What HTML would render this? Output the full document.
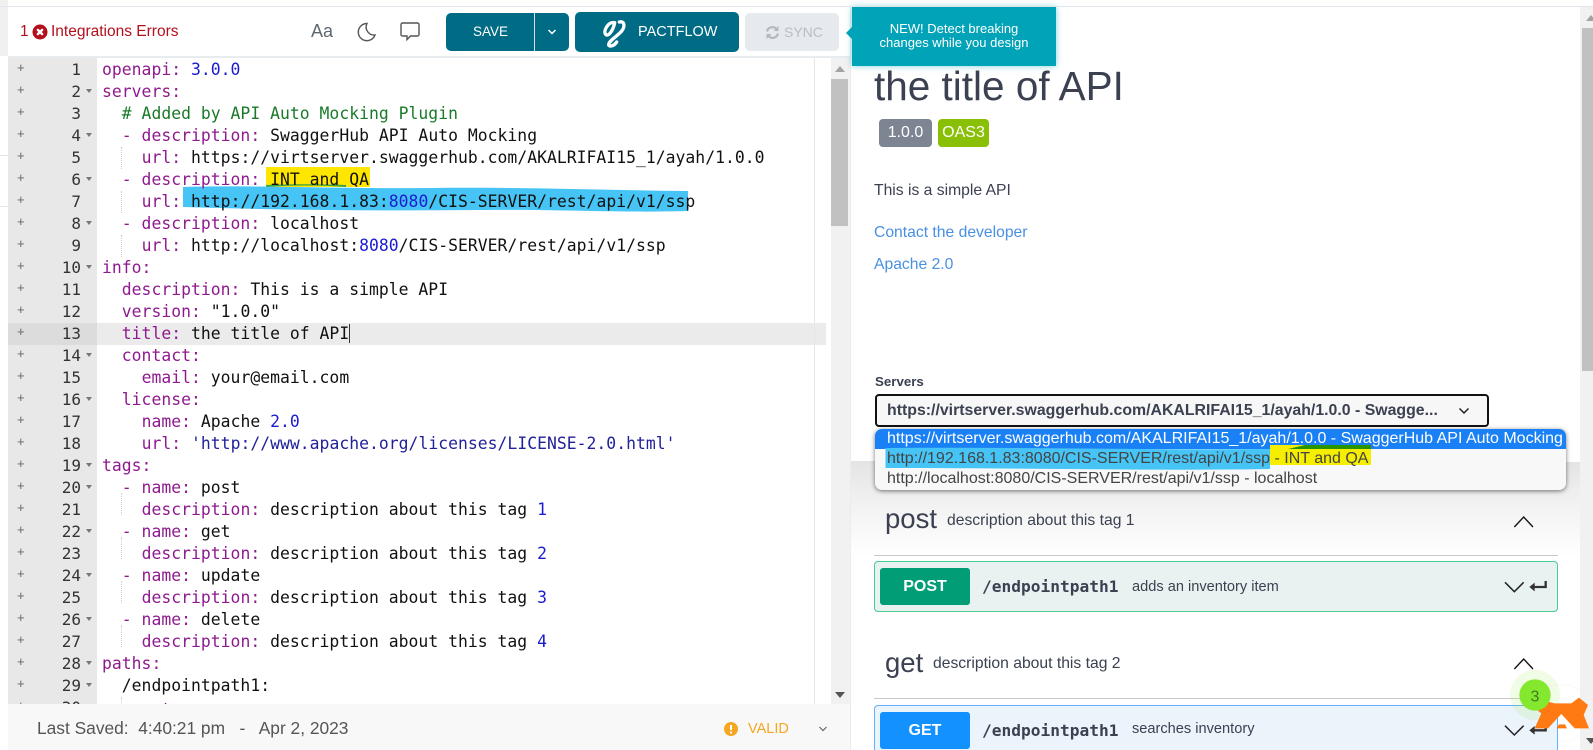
<!DOCTYPE html>
<html><head><meta charset="utf-8"><title>Editor</title>
<style>
*{box-sizing:border-box}
html,body{margin:0;padding:0;width:1593px;height:750px;overflow:hidden;background:#fff;font-family:"Liberation Sans",sans-serif}
#root{position:absolute;left:0;top:0;width:1593px;height:750px;overflow:hidden;contain:paint}
.a{position:absolute;white-space:nowrap}
#code{position:absolute;left:102px;top:59px;margin:0;font:16.4px/22px "DejaVu Sans Mono",monospace;letter-spacing:.02px;color:#111;z-index:3}
#code i{font-style:normal;color:#8f1a8f}
#code b{font-weight:normal;color:#1b1bd0}
#code u{text-decoration:none;color:#1a7a2a}
#nums{position:absolute;left:8px;top:59px;width:73px;text-align:right;font:16px/22px "DejaVu Sans Mono",monospace;color:#333;margin:0}
#plus{position:absolute;left:17px;top:57px;margin:0;font:13px/22px "Liberation Sans",sans-serif;color:#666}
.btn{position:absolute;background:#006b85;color:#fff;border-radius:5px;font-size:14px;text-align:center}
.guide{position:absolute;width:0;border-left:1px dotted #ccc;height:22px;z-index:2}
.fold{position:absolute;left:86px;width:0;height:0;border-left:3.5px solid transparent;border-right:3.5px solid transparent;border-top:4px solid #777}
.tag{font-size:27.5px;color:#3b4151}
.sum{font-size:14.6px;color:#3b4151}
.path{font:bold 16.2px "DejaVu Sans Mono",monospace;color:#3b4151}
</style></head><body>
<div id="root">

<!-- left edge -->
<div class="a" style="left:0;top:0;width:8px;height:56px;background:#f0f0f0"></div>
<div class="a" style="left:0;top:155px;width:8px;height:1px;background:#e3e3e3"></div>
<div class="a" style="left:0;top:206px;width:8px;height:1px;background:#e3e3e3"></div>
<div class="a" style="left:0;top:6px;width:1593px;height:1px;background:#dfe5eb;z-index:9"></div>

<!-- toolbar -->
<div class="a" style="left:8px;top:56px;width:842px;height:2px;background:#e8ecef"></div>
<div class="a" style="left:20px;top:23px;font-size:15.5px;color:#b3101c">1</div>
<svg class="a" style="left:32px;top:24px" width="16" height="16" viewBox="0 0 16 16"><circle cx="8" cy="8" r="7.500" fill="#b3101c"/><path d="M5.200 5.200l5.600 5.600M10.800 5.200l-5.600 5.600" stroke="#fff" stroke-width="2.400"/></svg>
<div class="a" style="left:51px;top:23px;font-size:15.500px;color:#b3101c">Integrations Errors</div>
<div class="a" style="left:311px;top:21px;font-size:18px;color:#5f6770">Aa</div>
<svg class="a" style="left:356px;top:21px" width="21" height="21" viewBox="0 0 21 21"><path d="M11 2.500a8.600 8.600 0 1 0 8 11.500 8 8 0 0 1-8-11.500z" fill="none" stroke="#555" stroke-width="1.400"/></svg>
<svg class="a" style="left:399px;top:21px" width="22" height="21" viewBox="0 0 22 21"><path d="M3.500 2h15a1.500 1.500 0 0 1 1.500 1.500v10a1.500 1.500 0 0 1-1.500 1.500h-7l-3.500 3.500v-3.500h-4.500a1.500 1.500 0 0 1-1.500-1.500v-10a1.500 1.500 0 0 1 1.500-1.500z" fill="none" stroke="#555" stroke-width="1.400"/></svg>

<div class="btn" style="left:446px;top:13px;width:123px;height:38px"></div>
<div class="a" style="left:534px;top:13px;width:1px;height:38px;background:#d5e3e8"></div>
<div class="a" style="left:473px;top:24px;font-size:13.500px;color:#fff">SAVE</div>
<svg class="a" style="left:546px;top:27px" width="12" height="10" viewBox="0 0 12 10"><path d="M2.500 3l3.500 3.500 3.500-3.500" fill="none" stroke="#fff" stroke-width="1.500"/></svg>
<div class="btn" style="left:575px;top:12px;width:164px;height:40px"></div>
<svg class="a" style="left:596px;top:14px" width="40" height="36" viewBox="0 0 120 108"><path d="M56 26C38 22 22 48 28 60 36 72 52 48 56 26M70 24C85 20 88 36 78 50 66 66 40 78 38 92 38 100 55 96 62 84" fill="none" stroke="#fff" stroke-width="10" stroke-linecap="round"/></svg>
<div class="a" style="left:638px;top:24px;font-size:14.500px;color:#fff">PACTFLOW</div>
<div class="a" style="left:745px;top:13px;width:94px;height:38px;background:#e6e9ee;border-radius:5px"></div>
<svg class="a" style="left:765px;top:25px" width="15" height="15" viewBox="0 0 15 15"><path d="M2 6.500a5.500 5.500 0 0 1 9.500-2.500M13 8.500a5.500 5.500 0 0 1-9.500 2.500" fill="none" stroke="#b4b9c1" stroke-width="2.200"/><path d="M13.500 1v5h-5zM1.500 14v-5h5z" fill="#b4b9c1"/></svg>
<div class="a" style="left:784px;top:24px;font-size:14px;color:#b9bdc5">SYNC</div>

<!-- gutter + editor -->
<div class="a" style="left:8px;top:58px;width:89px;height:646px;background:#e8e8e8"></div>
<div class="a" style="left:8px;top:323px;width:89px;height:22px;background:#dcdcdc"></div>
<div class="a" style="left:97px;top:323px;width:729px;height:22px;background:#ebebeb"></div>
<div class="a" style="left:8px;top:58px;width:842px;height:646px;overflow:hidden">
<div style="position:absolute;left:-8px;top:-58px;width:850px;height:704px">
<pre id="plus">+
+
+
+
+
+
+
+
+
+
+
+
+
+
+
+
+
+
+
+
+
+
+
+
+
+
+
+
+
+</pre>
<pre id="nums">1
2
3
4
5
6
7
8
9
10
11
12
13
14
15
16
17
18
19
20
21
22
23
24
25
26
27
28
29
30</pre>
<div class="fold" style="top:89px"></div><div class="fold" style="top:133px"></div><div class="fold" style="top:177px"></div><div class="fold" style="top:221px"></div><div class="fold" style="top:265px"></div><div class="fold" style="top:353px"></div><div class="fold" style="top:397px"></div><div class="fold" style="top:463px"></div><div class="fold" style="top:485px"></div><div class="fold" style="top:529px"></div><div class="fold" style="top:573px"></div><div class="fold" style="top:617px"></div><div class="fold" style="top:661px"></div><div class="fold" style="top:683px"></div>
<div class="guide" style="left:121px;top:147px"></div><div class="guide" style="left:121px;top:191px"></div><div class="guide" style="left:121px;top:235px"></div><div class="guide" style="left:121px;top:493px"></div><div class="guide" style="left:121px;top:537px"></div><div class="guide" style="left:121px;top:581px"></div><div class="guide" style="left:121px;top:625px"></div><div class="guide" style="left:121px;top:697px"></div>
<svg class="a" style="left:0;top:0;z-index:1" width="850" height="250"><path d="M266 167H370V187H266z" fill="#ffe600"/><path d="M266 187c25-2 55-2 80 0v-2c-25-1-55-1-80 0z" fill="#3aa33a"/><path d="M183 187C260 185 340 189 430 188 520 187 600 190 688 191L688 211C620 213 560 209 480 210 380 211 280 210 183 207z" fill="#45c4f5"/></svg>
<pre id="code"><i>openapi:</i> <b>3.0.0</b>
<i>servers:</i>
  <u># Added by API Auto Mocking Plugin</u>
  <i>- description:</i> SwaggerHub API Auto Mocking
    <i>url:</i> https://virtserver.swaggerhub.com/AKALRIFAI15_1/ayah/1.0.0
  <i>- description:</i> INT and QA
    <i>url:</i> http://192.168.1.83:<b>8080</b>/CIS-SERVER/rest/api/v1/ssp
  <i>- description:</i> localhost
    <i>url:</i> http://localhost:<b>8080</b>/CIS-SERVER/rest/api/v1/ssp
<i>info:</i>
  <i>description:</i> This is a simple API
  <i>version:</i> "1.0.0"
  <i>title:</i> the title of API<span style="border-left:1px solid #333"></span>
  <i>contact:</i>
    <i>email:</i> your@email.com
  <i>license:</i>
    <i>name:</i> Apache <b>2.0</b>
    <i>url:</i> <span style="color:#21219a">'http://www.apache.org/licenses/LICENSE-2.0.html'</span>
<i>tags:</i>
  <i>- name:</i> post
    <i>description:</i> description about this tag <b>1</b>
  <i>- name:</i> get
    <i>description:</i> description about this tag <b>2</b>
  <i>- name:</i> update
    <i>description:</i> description about this tag <b>3</b>
  <i>- name:</i> delete
    <i>description:</i> description about this tag <b>4</b>
<i>paths:</i>
  /endpointpath1:
    <i style="position:relative;top:2px">get:</i></pre>
</div></div>

<!-- editor scrollbar -->
<div class="a" style="left:814px;top:58px;width:1px;height:646px;background:#e6e6e6"></div>
<div class="a" style="left:831px;top:58px;width:19px;height:646px;background:#f1f1f1"></div>
<div class="a" style="left:831px;top:79px;width:17px;height:147px;background:#c1c1c1"></div>
<div class="a" style="left:835px;top:66px;width:0;height:0;border-left:5px solid transparent;border-right:5px solid transparent;border-bottom:6px solid #a3a3a3"></div>
<div class="a" style="left:835px;top:692px;width:0;height:0;border-left:5px solid transparent;border-right:5px solid transparent;border-top:6px solid #555"></div>

<!-- footer -->
<div class="a" style="left:8px;top:704px;width:842px;height:46px;background:#f8f8f8"></div>
<div class="a" style="left:37px;top:718px;font-size:17.350px;color:#555;white-space:pre">Last Saved:  4:40:21 pm   -   Apr 2, 2023</div>
<svg class="a" style="left:724px;top:722px" width="14" height="14" viewBox="0 0 14 14"><circle cx="7" cy="7" r="7" fill="#f5a623"/><path d="M7 3v5M7 9.500v2" stroke="#fff" stroke-width="2"/></svg>
<div class="a" style="left:748px;top:721px;font-size:14.500px;color:#f5a623">VALID</div>
<svg class="a" style="left:818px;top:725px" width="10" height="8" viewBox="0 0 10 8"><path d="M1.500 2l3.500 3.500 3.500-3.500" fill="none" stroke="#666" stroke-width="1.200"/></svg>

<!-- right panel -->
<div class="a" style="left:850px;top:7px;width:1px;height:743px;background:#ececec"></div>
<div class="a" style="left:851px;top:461px;width:24px;height:1px;background:#e4e4e4"></div>
<div class="a" style="left:851px;top:462px;width:729px;height:94px;background:linear-gradient(#e4e4e4,#efefef 35%,#fff 100%)"></div>
<div class="a" style="left:874px;top:63px;font-size:40.500px;line-height:46px;color:#3b4151">the title of API</div>
<div class="a" style="left:879px;top:119px;width:53px;height:28px;background:#7d8492;border-radius:4px;color:#fff;font-size:16px;line-height:28px;text-align:center">1.0.0</div>
<div class="a" style="left:938px;top:119px;width:51px;height:28px;background:#89bf04;border-radius:4px;color:#fff;font-size:16px;line-height:28px;text-align:center">OAS3</div>
<div class="a" style="left:874px;top:182px;font-size:15.700px;color:#3b4151">This is a simple API</div>
<div class="a" style="left:874px;top:224px;font-size:15.700px;color:#4990e2">Contact the developer</div>
<div class="a" style="left:874px;top:256px;font-size:15.700px;color:#4990e2">Apache 2.0</div>
<div class="a" style="left:875px;top:374px;font-size:13.300px;font-weight:bold;color:#3b4151">Servers</div>
<div class="a" style="left:875px;top:394px;width:614px;height:33px;background:#f7f7f7;border:2px solid #111;border-radius:4px"></div>
<div class="a" style="left:887px;top:402px;font-size:15.870px;font-weight:bold;color:#3b4151">https://virtserver.swaggerhub.com/AKALRIFAI15_1/ayah/1.0.0 - Swagge...</div>
<svg class="a" style="left:1457px;top:406px" width="14" height="10" viewBox="0 0 14 10"><path d="M2.500 2.500l4.500 4.500 4.500-4.500" fill="none" stroke="#222" stroke-width="1.500"/></svg>

<!-- dropdown -->
<div class="a" style="left:875px;top:429px;width:691px;height:61px;background:#f8f8f8;border-radius:7px;box-shadow:0 1px 5px rgba(0,0,0,.55);overflow:hidden;z-index:4">
<div class="a" style="left:0;top:0;width:691px;height:20px;background:#1a80f5"></div>
<svg class="a" style="left:0;top:0" width="691" height="61"><path d="M10.500 19C150 18 270 21 395 20V40C270 42 150 39 10.500 39z" fill="#45c4f5"/><path d="M395 16H496V36H395z" fill="#f5ee00"/><path d="M413 20L496 20V16H430z" fill="#2a9400"/></svg>
<div class="a" style="left:12px;top:0;font-size:16px;line-height:19px;color:#fff">https://virtserver.swaggerhub.com/AKALRIFAI15_1/ayah/1.0.0 - SwaggerHub API Auto Mocking</div>
<div class="a" style="left:12px;top:20px;font-size:16px;line-height:19px;color:#444">http://192.168.1.83:8080/CIS-SERVER/rest/api/v1/ssp - INT and QA</div>
<div class="a" style="left:12px;top:40px;font-size:16px;line-height:19px;color:#444">http://localhost:8080/CIS-SERVER/rest/api/v1/ssp - localhost</div>
</div>

<!-- post -->
<div class="a tag" style="left:885px;top:503px">post</div>
<div class="a" style="left:947px;top:512px;font-size:15.700px;color:#3b4151">description about this tag 1</div>
<div class="a" style="left:874px;top:555px;width:684px;height:1px;background:#c9c9c9"></div>
<div class="a" style="left:874px;top:561px;width:684px;height:51px;background:#e8f3f1;border:1px solid #49cc90;border-radius:4px"></div>
<div class="a" style="left:880px;top:568px;width:90px;height:37px;background:#009d77;border-radius:3px;color:#fff;font-size:16px;font-weight:bold;line-height:37px;text-align:center">POST</div>
<div class="a path" style="left:982px;top:577px">/endpointpath1</div>
<div class="a sum" style="left:1132px;top:579px">adds an inventory item</div>

<!-- get -->
<div class="a tag" style="left:885px;top:647px">get</div>
<div class="a" style="left:933px;top:655px;font-size:15.700px;color:#3b4151">description about this tag 2</div>
<div class="a" style="left:874px;top:698px;width:684px;height:1px;background:#c9c9c9"></div>
<!-- launcher white circle: sits behind the GET block and the scrollbar -->
<div class="a" style="left:1533px;top:685px;width:56px;height:56px;border-radius:50%;background:#fff;box-shadow:0 0 3px rgba(0,0,0,.06)"></div>
<div class="a" style="left:874px;top:705px;width:684px;height:45px;background:#ebf3fb;border:1px solid #61affe;border-bottom:0;border-radius:4px 4px 0 0"></div>
<div class="a" style="left:880px;top:712px;width:90px;height:37px;background:#1391ff;border-radius:3px;color:#fff;font-size:16px;font-weight:bold;line-height:37px;text-align:center">GET</div>
<div class="a path" style="left:982px;top:721px">/endpointpath1</div>
<div class="a sum" style="left:1132px;top:721px">searches inventory</div>

<!-- page scrollbar -->
<div class="a" style="left:1580px;top:7px;width:13px;height:743px;background:#f1f1f1"></div>
<div class="a" style="left:1582px;top:28px;width:11px;height:343px;background:#c1c1c1"></div>
<div class="a" style="left:1586px;top:15px;width:0;height:0;border-left:5px solid transparent;border-right:5px solid transparent;border-bottom:6px solid #a3a3a3"></div>
<div class="a" style="left:1586px;top:738px;width:0;height:0;border-left:5px solid transparent;border-right:5px solid transparent;border-top:6px solid #555"></div>

<!-- chevrons etc drawn in zoomed coords -->
<svg class="a" style="left:1300px;top:480px;z-index:6" width="293" height="270" viewBox="0 0 879 810">
<path d="M643 327l28-30 28 30" transform="translate(0,-186)" fill="none" stroke="#111" stroke-width="4"/>
<path d="M643 327l28-30 28 30" transform="translate(0,240)" fill="none" stroke="#111" stroke-width="4"/>
<g fill="none" stroke="#222" stroke-width="4.500">
<path d="M615 307l28 28 28-28"/>
<path d="M615 737l28 28 28-28"/>
</g>
<circle cx="705" cy="645" r="75" fill="#84e82f" opacity=".12"/>
<path d="M737 303v18h-40M737 733v18h-40" fill="none" stroke="#333" stroke-width="7"/>
<path d="M688 321l16-13v26zM688 751l16-13v26z" fill="#333"/>
<path d="M704 745L724 700 709 688 744 665 764 670H814L837 653 864 675 851 705 867 745H824L784 702 744 745z" fill="#ff7a12"/>
<path d="M769 745L777 733H795L801 745z" fill="#ff7a12"/>
<circle cx="705" cy="645" r="47" fill="#84e82f"/>
<text x="705" y="664" font-family="Liberation Sans,sans-serif" font-size="48" fill="#3e7a22" text-anchor="middle">3</text>
</svg>

<!-- tooltip -->
<div class="a" style="left:846px;top:27px;width:0;height:0;border-top:6px solid transparent;border-bottom:6px solid transparent;border-right:6px solid #00a3b7;z-index:7"></div>
<div class="a" style="left:852px;top:7px;width:204px;height:59px;background:#00a3b7;box-shadow:0 0 6px rgba(0,163,183,.5);color:#fff;font-size:13px;line-height:14px;text-align:center;padding-top:15px;z-index:7;white-space:normal">NEW! Detect breaking<br>changes while you design</div>

</div>
</body></html>
